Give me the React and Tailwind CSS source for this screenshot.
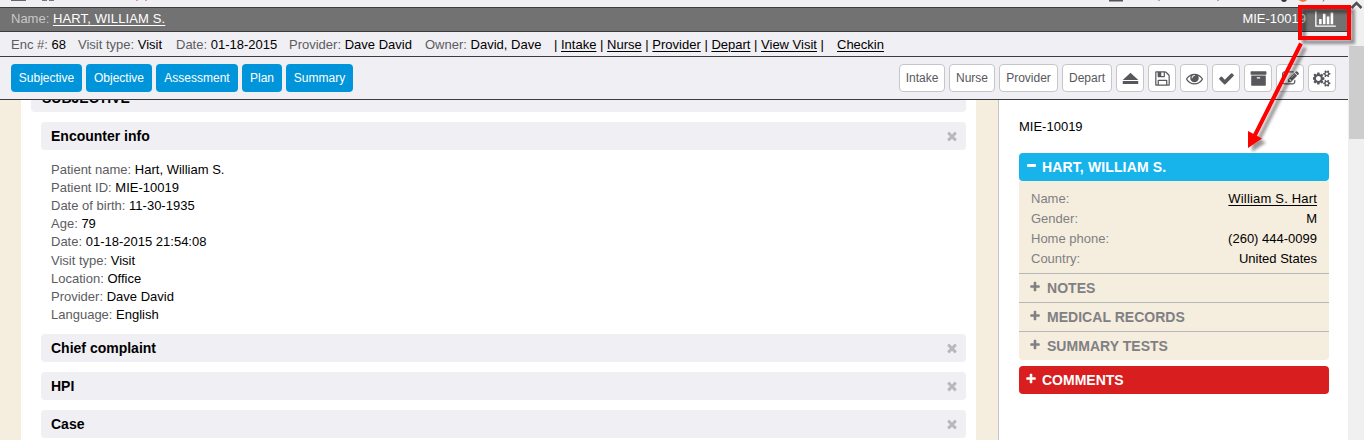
const ICONS = {
  floppy: ["0 0 1792 1792", "M512 1536h768v-384h-768v384zm896 0h128v-896q0-14-10-38.5t-20-34.5l-281-281q-10-10-34-20t-39-10v416q0 40-28 68t-68 28h-576q-40 0-68-28t-28-68v-416h-128v1280h128v-416q0-40 28-68t68-28h832q40 0 68 28t28 68v416zm-384-928v-320q0-13-9.5-22.5t-22.5-9.5h-192q-13 0-22.5 9.5t-9.5 22.5v320q0 13 9.5 22.5t22.5 9.5h192q13 0 22.5-9.5t9.5-22.5zm640 32v928q0 40-28 68t-68 28h-1344q-40 0-68-28t-28-68v-1344q0-40 28-68t68-28h928q40 0 88 20t76 48l280 280q28 28 48 76t20 88z"],
  eye: ["0 0 1792 1792", "M1664 960q-152-236-381-353 61 104 61 225 0 185-131.5 316.5t-316.5 131.5-316.5-131.5-131.5-316.5q0-121 61-225-229 117-381 353 133 205 333.5 326.5t434.5 121.5 434.5-121.5 333.5-326.5zm-720-384q0-20-14-34t-34-14q-125 0-214.5 89.5t-89.5 214.5q0 20 14 34t34 14 34-14 14-34q0-86 61-147t147-61q20 0 34-14t14-34zm848 384q0 34-20 69-140 230-376.5 368.5t-499.5 138.5-499.5-139-376.5-368q-20-35-20-69t20-69q140-229 376.5-368t499.5-139 499.5 139 376.5 368q20 35 20 69z"],
  check: ["0 0 1792 1792", "M1671 566q0 40-28 68l-724 724-136 136q-28 28-68 28t-68-28l-136-136-362-362q-28-28-28-68t28-68l136-136q28-28 68-28t68 28l294 295 656-657q28-28 68-28t68 28l136 136q28 28 28 68z"],
  archive: ["0 0 1792 1792", "M1088 832q0-26-19-45t-45-19h-256q-26 0-45 19t-19 45 19 45 45 19h256q26 0 45-19t19-45zm576-192v960q0 26-19 45t-45 19h-1408q-26 0-45-19t-19-45v-960q0-26 19-45t45-19h1408q26 0 45 19t19 45zm64-448v256q0 26-19 45t-45 19h-1536q-26 0-45-19t-19-45v-256q0-26 19-45t45-19h1536q26 0 45 19t19 45z"],
  edit: ["0 0 1792 1792", "M888 1184l116-116-152-152-116 116v56h96v96h56zm440-720q-16-16-33 1l-350 350q-17 17-1 33t33-1l350-350q17-17 1-33zm80 594v190q0 119-84.5 203.5t-203.5 84.5h-832q-119 0-203.5-84.5t-84.5-203.5v-832q0-119 84.5-203.5t203.5-84.5h832q63 0 117 25 15 7 18 23 3 17-9 29l-49 49q-14 14-32 8-23-6-45-6h-832q-66 0-113 47t-47 113v832q0 66 47 113t113 47h832q66 0 113-47t47-113v-126q0-13 9-22l64-64q15-15 35-7t20 29zm-96-738l288 288-672 672h-288v-288zm444 132l-92 92-288-288 92-92q28-28 68-28t68 28l152 152q28 28 28 68t-28 68z"],
  cogs: ["0 0 1920 1792", "M832 896q0-106-75-181t-181-75-181 75-75 181 75 181 181 75 181-75 75-181zm768 512q0-52-38-90t-90-38-90 38-38 90q0 53 37.5 90.5t90.5 37.5 90.5-37.5 37.5-90.5zm0-1024q0-52-38-90t-90-38-90 38-38 90q0 53 37.5 90.5t90.5 37.5 90.5-37.5 37.5-90.5zm-384 421v185q0 10-7 19.5t-16 10.5l-155 24q-11 35-32 76 34 48 90 115 7 11 7 20 0 12-7 19-23 30-82.5 89.5t-78.5 59.5q-11 0-21-7l-115-90q-37 19-77 31-11 108-23 155-7 24-30 24h-186q-11 0-20-7.5t-10-17.5l-23-153q-34-10-75-31l-118 89q-7 7-20 7-11 0-21-8-144-133-144-160 0-9 7-19 10-14 41-53t47-61q-23-44-35-82l-152-24q-10-1-17-9.5t-7-19.5v-185q0-10 7-19.5t16-10.5l155-24q11-35 32-76-34-48-90-115-7-11-7-20 0-12 7-20 22-30 82-89t79-59q11 0 21 7l115 90q34-18 77-32 11-108 23-154 7-24 30-24h186q11 0 20 7.5t10 17.5l23 153q34 10 75 31l118-89q8-7 20-7 11 0 21 8 144 133 144 160 0 8-7 19-12 16-42 54t-45 60q23 48 34 82l152 23q10 2 17 10.5t7 19.5zm640 533v140q0 16-149 31-12 27-30 52 51 113 51 138 0 4-4 7-122 71-124 71-8 0-46-47t-52-68q-20 2-30 2t-30-2q-14 21-52 68t-46 47q-2 0-124-71-4-3-4-7 0-25 51-138-18-25-30-52-149-15-149-31v-140q0-16 149-31 13-29 30-52-51-113-51-138 0-4 4-7 4-2 35-20t59-34 30-16q8 0 46 46.5t52 67.5q20-2 30-2t30 2q51-71 92-112l6-2q4 0 124 70 4 3 4 7 0 25-51 138 17 23 30 52 149 15 149 31zm0-1024v140q0 16-149 31-12 27-30 52 51 113 51 138 0 4-4 7-122 71-124 71-8 0-46-47t-52-68q-20 2-30 2t-30-2q-14 21-52 68t-46 47q-2 0-124-71-4-3-4-7 0-25 51-138-18-25-30-52-149-15-149-31v-140q0-16 149-31 13-29 30-52-51-113-51-138 0-4 4-7 4-2 35-20t59-34 30-16q8 0 46 46.5t52 67.5q20-2 30-2t30 2q51-71 92-112l6-2q4 0 124 70 4 3 4 7 0 25-51 138 17 23 30 52 149 15 149 31z"],
  eject: ["0 0 1792 1792", "M80 1060 L896 290 L1712 1060zM80 1170h1632v310h-1632z"],
  chart: ["0 0 2048 1792", "M640 896v512h-256v-512h256zm384-512v1024h-256v-1024h256zm1024 1152v128h-2048v-1536h128v1408h1920zm-640-896v768h-256v-768h256zm384-384v1152h-256v-1152h256z"],
  times: ["0 0 1792 1792", "M1490 1322q0 40-28 68l-136 136q-28 28-68 28t-68-28l-294-294-294 294q-28 28-68 28t-68-28l-136-136q-28-28-28-68t28-68l294-294-294-294q-28-28-28-68t28-68l136-136q28-28 68-28t68 28l294 294 294-294q28-28 68-28t68 28l136 136q28 28 28 68t-28 68l-294 294 294 294q28 28 28 68z"],
  plus: ["0 0 1792 1792", "M1600 736v192q0 40-28 68t-68 28h-416v416q0 40-28 68t-68 28h-192q-40 0-68-28t-28-68v-416h-416q-40 0-68-28t-28-68v-192q0-40 28-68t68-28h416v-416q0-40 28-68t68-28h192q40 0 68 28t28 68v416h416q40 0 68 28t28 68z"],
};

function Icon({ name, className }) {
  const [viewBox, d] = ICONS[name];
  return (
    <svg viewBox={viewBox} className={className} fill="currentColor">
      <path d={d} />
    </svg>
  );
}

const tabs = [
  ["Subjective", "w-[71px]"],
  ["Objective", "w-[66px]"],
  ["Assessment", "w-[82px]"],
  ["Plan", "w-[40px]"],
  ["Summary", "w-[67px]"],
];

const actions = [
  ["Intake", "w-[46px]"],
  ["Nurse", "w-[46px]"],
  ["Provider", "w-[59px]"],
  ["Depart", "w-[50px]"],
];

const tools = ["eject", "floppy", "eye", "check", "archive", "edit", "cogs"];

const encounter = [
  ["Patient name", "Hart, William S."],
  ["Patient ID", "MIE-10019"],
  ["Date of birth", "11-30-1935"],
  ["Age", "79"],
  ["Date", "01-18-2015 21:54:08"],
  ["Visit type", "Visit"],
  ["Location", "Office"],
  ["Provider", "Dave David"],
  ["Language", "English"],
];

const demographics = [
  ["Name", "William S. Hart", true],
  ["Gender", "M"],
  ["Home phone", "(260) 444-0099"],
  ["Country", "United States"],
];

const links = ["Intake", "Nurse", "Provider", "Depart", "View Visit"];

function Field({ label, value, className }) {
  return (
    <span className={className}>
      <span className="text-[#5c5c60]">{label}:</span> {value}
    </span>
  );
}

function SectionHead({ title }) {
  return (
    <div className="flex h-7 items-center justify-between rounded bg-[#f0eff4] pl-[10px] pr-[7px] text-[14px] font-bold">
      <span>{title}</span>
      <Icon name="times" className="size-[14px] text-[#b9b9bd]" />
    </div>
  );
}

function BrowserEdge() {
  return (
    <svg className="block h-[7px] w-[1348px]" viewBox="0 0 1348 7">
      <path d="M11 0h15v1h-15z" fill="#666" />
      <path d="M42 0h5v1h-5zM49 0h5v1h-5z" fill="#777" />
      <path d="M136 0h2v1h-2zM145 0h2v1h-2z" fill="#d99" />
      <path d="M1109 0h14v1.500h-14z" fill="#555" />
      <path d="M1159 0v1M1218 0v1M1324 0l-1 1.500" stroke="#666" fill="none" />
      <circle cx="1284" cy="-1" r="3" fill="#333" />
      <circle cx="1303" cy="-3" r="5" fill="#f08030" />
    </svg>
  );
}

function Callout() {
  return (
    <svg className="pointer-events-none absolute left-[1230px] top-0 h-[170px] w-[134px]" viewBox="1230 0 134 170">
      <defs>
        <filter id="soft" x="-30%" y="-30%" width="160%" height="160%">
          <feDropShadow dx="4" dy="4" stdDeviation="1.500" floodColor="#000" floodOpacity="0.4" />
        </filter>
      </defs>
      <g filter="url(#soft)">
        <rect x="1300" y="7" width="49" height="31" fill="none" stroke="#f00" strokeWidth="4" />
        <path d="M1301 43.500L1254 137" stroke="#f00" strokeWidth="4" />
        <path d="M1248 148L1248 131L1262 138.500Z" fill="#f00" />
      </g>
    </svg>
  );
}

export default function App() {
  return (
    <div className="relative flex h-[440px] w-[1364px] overflow-hidden bg-white font-['Liberation_Sans',Arial,sans-serif] text-[13px] leading-[18px] text-black">
      <div className="flex w-[1348px] flex-col">
        <header className="shrink-0 bg-[#f0eff4]">
          <BrowserEdge />
          <div className="flex h-[25px] items-center justify-between border-y border-[#3c3c40] bg-[#727272] pb-px pl-[11px] pr-3 text-white">
            <span>
              <span className="text-[#c8c8c8]">Name:</span>{" "}
              <a className="tracking-[0.13px] underline underline-offset-2">HART, WILLIAM S.</a>
            </span>
            <span className="flex items-center gap-[9px]">
              MIE-10019
              <Icon name="chart" className="h-[18px] w-[21px]" />
            </span>
          </div>
          <div className="flex h-[25px] items-center border-b border-[#3c3c40] pl-[11px] pt-px">
            <Field label="Enc #" value="68" className="w-[67px]" />
            <Field label="Visit type" value="Visit" className="w-[98px]" />
            <Field label="Date" value="01-18-2015" className="w-[113px]" />
            <Field label="Provider" value="Dave David" className="w-[136px]" />
            <Field label="Owner" value="David, Dave" className="w-[129px]" />
            <span className="w-[283px] whitespace-nowrap">
              {links.map((l) => (
                <span key={l}>
                  | <a className="underline underline-offset-2">{l}</a>{" "}
                </span>
              ))}
              |
            </span>
            <a className="underline underline-offset-2">Checkin</a>
          </div>
          <div className="flex h-[43px] items-center justify-between border-b border-[#3c3c40] pl-[11px] pr-3 text-[12px]">
            <div className="flex gap-1">
              {tabs.map(([t, w]) => (
                <button key={t} className={`${w} h-7 rounded bg-[#0095da] pb-px text-center text-white`}>
                  {t}
                </button>
              ))}
            </div>
            <div className="flex gap-1 text-[#58585c]">
              {actions.map(([t, w]) => (
                <button key={t} className={`${w} h-7 rounded border border-[#c6c6ca] bg-white pb-px text-center`}>
                  {t}
                </button>
              ))}
              {tools.map((t) => (
                <button key={t} className="flex h-7 w-7 items-center justify-center rounded border border-[#c6c6ca] bg-white">
                  <Icon name={t} className={t === "cogs" ? "h-[17px] w-[18px] shrink-0" : "size-[17px] shrink-0"} />
                </button>
              ))}
            </div>
          </div>
        </header>

        <div className="flex min-h-0 flex-1">
          <main className="flex w-[999px] shrink-0 border-r border-[#c4c4c8] bg-[#f5eddd] pl-[21px]">
            <div className="flex w-[955px] shrink-0 flex-col overflow-hidden bg-white px-[10px]">
              <div className="flex h-3 shrink-0 items-end overflow-hidden rounded-b bg-[#f0eff4] pb-[9px] pl-[11px]">
                <span className="text-[14px] font-bold leading-[10px]">SUBJECTIVE</span>
              </div>
              <div className="flex flex-col pl-[10px] pt-[10px]">
                <SectionHead title="Encounter info" />
                <dl className="flex h-[184px] flex-col pl-[10px] pt-[10.900px]">
                  {encounter.map(([k, v]) => (
                    <div key={k} className="h-[18.150px]">
                      <Field label={k} value={v} />
                    </div>
                  ))}
                </dl>
                <div className="flex flex-col gap-[10px]">
                  <SectionHead title="Chief complaint" />
                  <SectionHead title="HPI" />
                  <SectionHead title="Case" />
                </div>
              </div>
            </div>
          </main>

          <aside className="flex flex-1 flex-col bg-white pl-[20px] pr-[19px] pt-[18px]">
            <span>MIE-10019</span>
            <div className="mt-[17px] flex h-7 items-center gap-[6px] rounded bg-[#17b4ec] pl-2 text-[14px] font-bold tracking-[0.13px] text-white">
              <span className="mb-[3px] h-[3px] w-[9px] rounded-[1px] bg-white" />
              HART, WILLIAM S.
            </div>
            <div className="rounded-b bg-[#f5eddd]">
              <div className="flex h-[92px] flex-col px-3 pt-2 text-[13px] leading-5">
                {demographics.map(([k, v, link]) => (
                  <div key={k} className="flex justify-between">
                    <span className="text-[#808084]">{k}:</span>
                    <span className={link ? "tracking-[0.18px] underline underline-offset-2" : ""}>{v}</span>
                  </div>
                ))}
              </div>
              {["NOTES", "MEDICAL RECORDS", "SUMMARY TESTS"].map((t) => (
                <div key={t} className="flex h-[29px] items-center gap-[6px] border-t border-[#b8b8b8] pl-[10px] text-[14px] font-bold tracking-[0.03px] text-[#808084]">
                  <Icon name="plus" className="mb-[3px] size-[12px]" />
                  {t}
                </div>
              ))}
            </div>
            <div className="mt-[6px] flex h-7 items-center gap-[5px] rounded bg-[#d81e1e] pl-[6px] text-[14px] font-bold text-white">
              <Icon name="plus" className="mb-[3px] size-[12px]" />
              COMMENTS
            </div>
          </aside>
        </div>
      </div>

      <div className="flex w-4 flex-col items-center bg-[#f0f0f0]">
        <svg viewBox="0 0 16 46" className="h-[46px] w-4 shrink-0">
          <path d="M3.500 8L8.500 3L13.500 8" stroke="#505050" strokeWidth="2.500" fill="none" />
        </svg>
        <div className="h-[93px] w-[15px] bg-[#cdcdcd]" />
      </div>
      <Callout />
    </div>
  );
}
